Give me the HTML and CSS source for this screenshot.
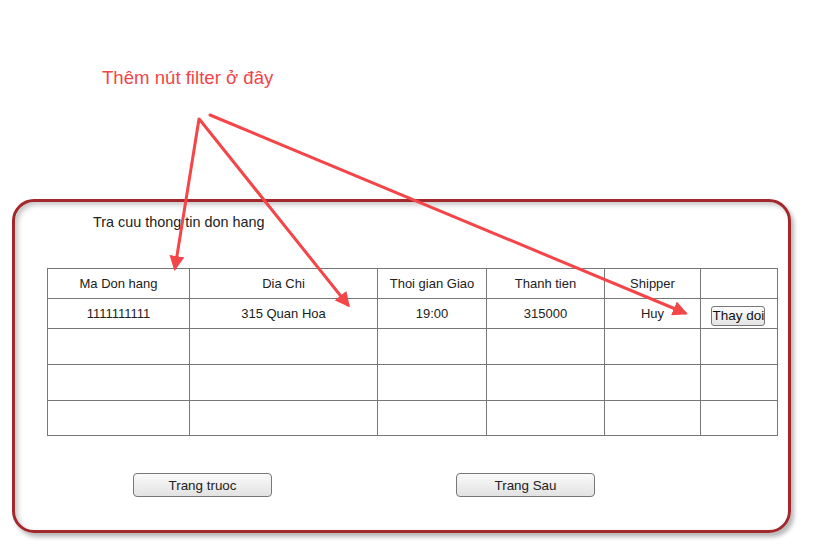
FILE: index.html
```html
<!DOCTYPE html>
<html>
<head>
<meta charset="utf-8">
<link rel="stylesheet" href="styles.css">
</head>
<body>
<div class="note">Thêm nút filter ở đây</div>
<div class="panel">
  <div class="title">Tra cuu thong tin don hang</div>
  <table class="grid">
    <colgroup>
      <col class="c1"><col class="c2"><col class="c3"><col class="c4"><col class="c5"><col class="c6">
    </colgroup>
    <tr class="head"><td>Ma Don hang</td><td>Dia Chi</td><td>Thoi gian Giao</td><td>Thanh tien</td><td>Shipper</td><td></td></tr>
    <tr class="first"><td>1111111111</td><td>315 Quan Hoa</td><td>19:00</td><td>315000</td><td>Huy</td><td><button class="small">Thay doi</button></td></tr>
    <tr class="empty"><td></td><td></td><td></td><td></td><td></td><td></td></tr>
    <tr class="empty"><td></td><td></td><td></td><td></td><td></td><td></td></tr>
    <tr class="empty last"><td></td><td></td><td></td><td></td><td></td><td></td></tr>
  </table>
  <div class="pager">
    <button class="btn">Trang truoc</button>
    <button class="btn">Trang Sau</button>
  </div>
</div>
<svg class="arrows" width="815" height="558" viewBox="0 0 815 558">
  <defs>
    <marker id="ah" markerWidth="5" markerHeight="5" refX="4" refY="2.5" orient="auto" markerUnits="strokeWidth">
      <path d="M0,0 L5,2.5 L0,5 z" fill="#f44548"/>
    </marker>
  </defs>
  <g stroke="#f44548" stroke-width="3" fill="none" stroke-linecap="round">
    <line x1="199" y1="119" x2="175" y2="268" marker-end="url(#ah)"/>
    <line x1="200" y1="120" x2="348" y2="305" marker-end="url(#ah)"/>
    <line x1="210" y1="115" x2="685" y2="313" marker-end="url(#ah)"/>
  </g>
</svg>
</body>
</html>
```
FILE: styles.css
```css
html, body {
  margin: 0;
  padding: 0;
  background: #fff;
  font-family: "Liberation Sans", Arial, sans-serif;
  color: #222;
}
body {
  position: relative;
  width: 815px;
  height: 558px;
  overflow: hidden;
}
.note {
  position: absolute;
  left: 102px;
  top: 67px;
  font-size: 18.6px;
  color: #f04548;
  white-space: nowrap;
}
.panel {
  position: absolute;
  left: 12px;
  top: 199px;
  width: 773px;
  height: 328px;
  border: 3px solid #a3282c;
  border-radius: 22px;
  box-shadow: inset 3px 3px 5px rgba(0,0,0,0.22), 3px 4px 4px rgba(0,0,0,0.28);
  box-sizing: content-box;
}
.title {
  margin: 12px 0 0 78px;
  font-size: 14.4px;
  line-height: 16px;
  color: #222;
}
.grid {
  margin: 38px 0 0 32px;
  border-collapse: collapse;
  table-layout: fixed;
  width: 731px;
  font-size: 13px;
}
.grid td {
  border: 1px solid #777;
  text-align: center;
  padding: 0;
  color: #222;
}
.c1 { width: 142px; }
.c2 { width: 188px; }
.c3 { width: 109px; }
.c4 { width: 118px; }
.c5 { width: 96px; }
.c6 { width: 77px; }
.head td { height: 29px; }
.first td { height: 29px; }
.empty td { height: 35px; }
.empty.last td { height: 34px; }
.small {
  display: inline-block;
  vertical-align: middle;
  font-family: "Liberation Sans", Arial, sans-serif;
  font-size: 13.5px;
  padding: 0 1px;
  margin: 4px 3px 0 0;
  border: 1px solid #777;
  border-radius: 3px;
  background: linear-gradient(#fdfdfd, #e4e4e4);
  color: #111;
  width: 54px;
  height: 20px;
  line-height: 17px;
  white-space: nowrap;
  overflow: hidden;
}
.pager {
  display: flex;
  gap: 184px;
  margin: 37px 0 0 118px;
}
.btn {
  width: 139px;
  height: 24px;
  font-family: "Liberation Sans", Arial, sans-serif;
  font-size: 13.4px;
  color: #222;
  border: 1px solid #777;
  border-radius: 4px;
  background: linear-gradient(#fafafa, #e2e2e2);
  padding: 0;
}
.arrows {
  position: absolute;
  left: 0;
  top: 0;
  pointer-events: none;
}
```
